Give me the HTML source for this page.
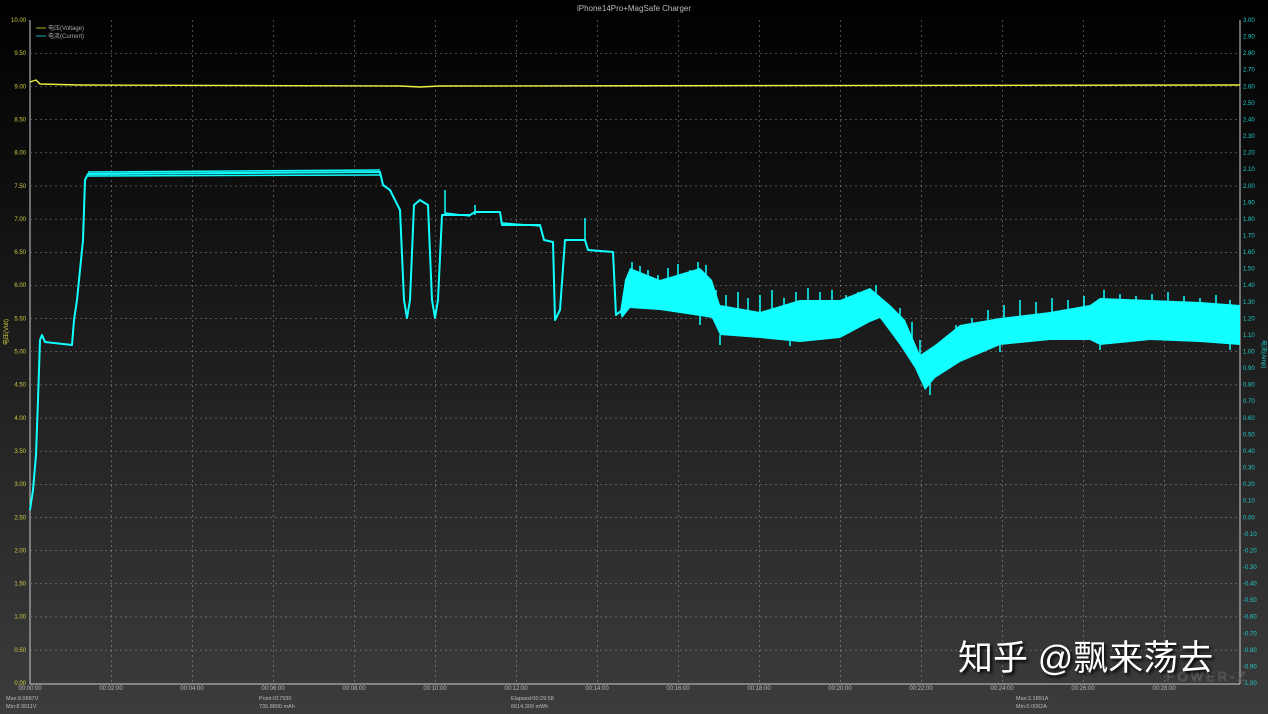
<!DOCTYPE html>
<html><head><meta charset="utf-8"><style>
html,body{margin:0;padding:0;background:#000}
#c{position:relative;width:1268px;height:714px;overflow:hidden;background:linear-gradient(#000 0%,#111 30%,#2a2a2a 70%,#3c3c3c 100%);font-family:"Liberation Sans",sans-serif}
svg{position:absolute;left:0;top:0}
.wm{position:absolute;left:958px;top:638px;font-family:"Liberation Sans","Noto Sans CJK SC",sans-serif;font-size:35px;line-height:42px;color:#fff;text-shadow:2px 2px 3px #000;white-space:nowrap}
</style></head><body><div id="c">
<svg width="1268" height="714" font-family="Liberation Sans, sans-serif">
<defs>
<pattern id="gv" x="30" y="0" width="81" height="714" patternUnits="userSpaceOnUse"><line x1="0" y1="0" x2="0" y2="714" stroke="#bbb" stroke-width="0.8" stroke-dasharray="2,3"/></pattern>
<pattern id="gh" x="0" y="20" width="1268" height="33.15" patternUnits="userSpaceOnUse"><line x1="0" y1="0" x2="1268" y2="0" stroke="#bbb" stroke-width="0.8" stroke-dasharray="2,3"/></pattern>
</defs>
<rect x="31" y="20" width="1209" height="663" fill="url(#gv)"/>
<rect x="31" y="21" width="1209" height="662" fill="url(#gh)"/>
<line x1="30" y1="20" x2="30" y2="684" stroke="#ccc" stroke-width="1"/>
<line x1="1240" y1="20" x2="1240" y2="684" stroke="#ccc" stroke-width="1"/>
<line x1="30" y1="684" x2="1240" y2="684" stroke="#ccc" stroke-width="1"/>
<text x="634" y="11" fill="#bbb" font-size="8" text-anchor="middle">iPhone14Pro+MagSafe Charger</text>
<line x1="36" y1="28" x2="46" y2="28" stroke="#dd3" stroke-width="0.8"/><text x="48" y="30" fill="#aaa" font-size="6">电压(Voltage)</text>
<line x1="36" y1="36" x2="46" y2="36" stroke="#2dd" stroke-width="0.8"/><text x="48" y="38" fill="#aaa" font-size="6">电流(Current)</text>
<g fill="#cc4" font-size="6" text-anchor="end">
<text x="26" y="22">10.00</text><text x="26" y="55.2">9.50</text><text x="26" y="88.3">9.00</text><text x="26" y="121.5">8.50</text><text x="26" y="154.6">8.00</text><text x="26" y="187.8">7.50</text><text x="26" y="220.9">7.00</text><text x="26" y="254.1">6.50</text><text x="26" y="287.2">6.00</text><text x="26" y="320.4">5.50</text><text x="26" y="353.5">5.00</text><text x="26" y="386.7">4.50</text><text x="26" y="419.8">4.00</text><text x="26" y="453">3.50</text><text x="26" y="486.1">3.00</text><text x="26" y="519.3">2.50</text><text x="26" y="552.4">2.00</text><text x="26" y="585.6">1.50</text><text x="26" y="618.7">1.00</text><text x="26" y="651.9">0.50</text><text x="26" y="685">0.00</text>
</g>
<text x="8" y="345" fill="#cc4" font-size="6" transform="rotate(-90 8 345)">电压(Volt)</text>
<text x="1262" y="340" fill="#2cc" font-size="6" transform="rotate(90 1262 340)">电流(Amp)</text>
<g fill="#2cc" font-size="6">
<text x="1243" y="22">3.00</text><text x="1243" y="38.6">2.90</text><text x="1243" y="55.2">2.80</text><text x="1243" y="71.7">2.70</text><text x="1243" y="88.3">2.60</text><text x="1243" y="104.9">2.50</text><text x="1243" y="121.5">2.40</text><text x="1243" y="138">2.30</text><text x="1243" y="154.6">2.20</text><text x="1243" y="171.2">2.10</text><text x="1243" y="187.8">2.00</text><text x="1243" y="204.3">1.90</text><text x="1243" y="220.9">1.80</text><text x="1243" y="237.5">1.70</text><text x="1243" y="254.1">1.60</text><text x="1243" y="270.6">1.50</text><text x="1243" y="287.2">1.40</text><text x="1243" y="303.8">1.30</text><text x="1243" y="320.4">1.20</text><text x="1243" y="336.9">1.10</text><text x="1243" y="353.5">1.00</text><text x="1243" y="370.1">0.90</text><text x="1243" y="386.7">0.80</text><text x="1243" y="403.2">0.70</text><text x="1243" y="419.8">0.60</text><text x="1243" y="436.4">0.50</text><text x="1243" y="453">0.40</text><text x="1243" y="469.5">0.30</text><text x="1243" y="486.1">0.20</text><text x="1243" y="502.7">0.10</text><text x="1243" y="519.3">0.00</text><text x="1243" y="535.8">-0.10</text><text x="1243" y="552.4">-0.20</text><text x="1243" y="569">-0.30</text><text x="1243" y="585.6">-0.40</text><text x="1243" y="602.1">-0.50</text><text x="1243" y="618.7">-0.60</text><text x="1243" y="635.3">-0.70</text><text x="1243" y="651.9">-0.80</text><text x="1243" y="668.4">-0.90</text><text x="1243" y="685">-1.00</text>
</g>
<g fill="#bbb" font-size="6" text-anchor="middle">
<text x="30" y="690">00:00:00</text><text x="111" y="690">00:02:00</text><text x="192" y="690">00:04:00</text><text x="273" y="690">00:06:00</text><text x="354" y="690">00:08:00</text><text x="435" y="690">00:10:00</text><text x="516" y="690">00:12:00</text><text x="597" y="690">00:14:00</text><text x="678" y="690">00:16:00</text><text x="759" y="690">00:18:00</text><text x="840" y="690">00:20:00</text><text x="921" y="690">00:22:00</text><text x="1002" y="690">00:24:00</text><text x="1083" y="690">00:26:00</text><text x="1164" y="690">00:28:00</text>
</g>
<g fill="#bbb" font-size="5.5">
<text x="6" y="700">Max:9.0687V</text><text x="6" y="708">Min:8.9011V</text>
<text x="259" y="700">Point:017930</text><text x="259" y="708">735.8800 mAh</text>
<text x="511" y="700">Elapsed:00:29:58</text><text x="511" y="708">6614.300 mWh</text>
<text x="1016" y="700">Max:2.1891A</text><text x="1016" y="708">Min:0.0062A</text>
</g>
<path d="M30,82 L36,80 L40,84 L80,85 L400,86 L420,87 L440,86 L1240,85" fill="none" stroke="#ee4" stroke-width="1.4"/>
<path d="M30,510 L33,490 L36,455 L38,400 L40,340 L42,335 L45,342 L72,345 L74,320 L77,300 L80,270 L83,240 L85,180 L88,174 L380,172 L383,185 L390,190 L395,200 L400,210 L404,300 L407,318 L410,300 L414,205 L420,200 L428,205 L432,300 L435,318 L438,300 L442,215 L470,215 L475,212 L500,212 L502,225 L540,225 L544,240 L553,242 L555,320 L560,310 L565,240 L585,240 L588,250 L613,252 L616,315 L622,310" fill="none" stroke="#1ff" stroke-width="2" stroke-linejoin="round"/>
<path d="M88,172 L380,170 M88,176 L380,175 M445,213 L470,216 M502,223 L540,226 M445,190 L445,215 M475,205 L475,215 M585,218 L585,240" fill="none" stroke="#1ff" stroke-width="1.5"/>
<path d="M620,312 L625,280 L630,268 L660,280 L700,268 L712,280 L720,305 L760,312 L800,300 L840,300 L870,288 L890,305 L905,320 L920,355 L935,345 L960,325 L1000,318 L1050,312 L1090,305 L1100,298 L1150,300 L1200,302 L1240,305 L1240,345 L1200,342 L1150,340 L1100,345 L1090,340 L1050,340 L1000,345 L960,362 L935,378 L925,390 L915,368 L900,345 L880,318 L870,322 L840,338 L800,342 L760,338 L720,335 L712,318 L700,316 L660,310 L630,308 L622,318 Z" fill="#1ff"/>
<path d="M632,262 V285 M640,266 V285 M648,270 V290 M658,275 V290 M668,268 V290 M678,264 V285 M690,270 V290 M698,262 V285 M706,265 V290 M716,290 V310 M726,295 V312 M738,292 V315 M748,298 V315 M760,295 V315 M772,290 V310 M784,298 V312 M796,292 V310 M808,288 V305 M820,292 V305 M832,290 V305 M846,295 V305 M858,292 V300 M876,285 V300 M900,308 V325 M912,322 V345 M920,340 V360 M930,372 V395 M944,340 V360 M956,325 V345 M972,318 V335 M988,310 V330 M1004,305 V322 M1020,300 V318 M1036,302 V318 M1052,298 V315 M1068,300 V312 M1084,296 V310 M1104,290 V305 M1120,294 V305 M1136,296 V305 M1152,294 V305 M1168,292 V305 M1184,296 V306 M1200,298 V308 M1216,295 V308 M1230,300 V310 M700,316 V325 M720,335 V345 M790,340 V346 M1000,345 V352 M1100,345 V350 M1230,344 V350" fill="none" stroke="#1ff" stroke-width="1.5"/>
<text x="1166" y="681" fill="none" stroke="#666" stroke-width="0.6" font-size="13" letter-spacing="3">POWER-Z</text>
</svg>
<div class="wm">知乎 @飘来荡去</div>
</div></body></html>
